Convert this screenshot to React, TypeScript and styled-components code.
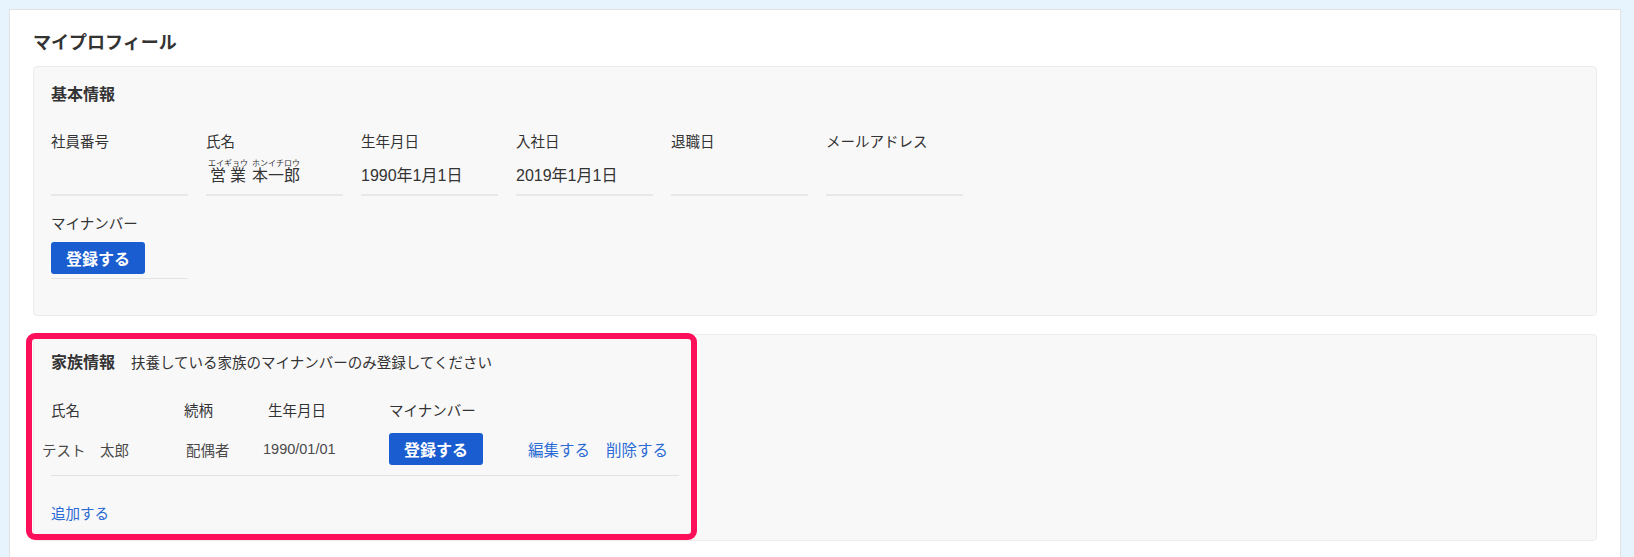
import styled, { createGlobalStyle } from "styled-components";

const GlobalStyle = createGlobalStyle`
    body {
        margin: 0;
        background: #e8f4fd;
        font-family: "Liberation Sans", "Noto Sans CJK JP", sans-serif;
        color: #333;
    }
`

const basicFields = [
    { label: '社員番号', value: '' },
    { label: '氏名', value: 'ruby' },
    { label: '生年月日', value: '1990年1月1日' },
    { label: '入社日', value: '2019年1月1日' },
    { label: '退職日', value: '' },
    { label: 'メールアドレス', value: '' },
];

const family = [
    { name: 'テスト　太郎', relation: '配偶者', birthday: '1990/01/01' },
];

export default function App() {
    return (
        <>
            <GlobalStyle />
            <Page>
                <Card>
                    <PageTitle>マイプロフィール</PageTitle>

                    <Panel>
                        <PanelHeading>
                            <PanelTitle>基本情報</PanelTitle>
                        </PanelHeading>
                        <FieldRow>
                            {basicFields.map((f) => (
                                <Field key={f.label}>
                                    <FieldLabel>{f.label}</FieldLabel>
                                    <FieldValue>
                                        {f.value === 'ruby' ? (
                                            <NameText>
                                                <ruby>営業<rt>エイギョウ</rt></ruby>
                                                <ruby>本一郎<rt>ホンイチロウ</rt></ruby>
                                            </NameText>
                                        ) : f.value}
                                    </FieldValue>
                                </Field>
                            ))}
                        </FieldRow>
                        <FieldRow>
                            <Field>
                                <FieldLabel>マイナンバー</FieldLabel>
                                <FieldAction>
                                    <PrimaryButton>登録する</PrimaryButton>
                                </FieldAction>
                            </Field>
                        </FieldRow>
                    </Panel>

                    <Panel $spaced>
                        <Highlight />
                        <PanelHeading>
                            <PanelTitle>家族情報</PanelTitle>
                            <PanelNote>扶養している家族のマイナンバーのみ登録してください</PanelNote>
                        </PanelHeading>
                        <FamilyTable>
                            <TableHead>
                                <HeadCell>氏名</HeadCell>
                                <HeadCell>続柄</HeadCell>
                                <HeadCell $indent={5}>生年月日</HeadCell>
                                <HeadCell>マイナンバー</HeadCell>
                                <HeadCell />
                            </TableHead>
                            {family.map((m) => (
                                <TableRow key={m.name}>
                                    <NameCell>{m.name}</NameCell>
                                    <RowCell $indent={2}>{m.relation}</RowCell>
                                    <RowCell>{m.birthday}</RowCell>
                                    <RowCell>
                                        <PrimaryButton>登録する</PrimaryButton>
                                    </RowCell>
                                    <Actions>
                                        <RowLink>編集する</RowLink>
                                        <RowLink>削除する</RowLink>
                                    </Actions>
                                </TableRow>
                            ))}
                        </FamilyTable>
                        <AddLink>追加する</AddLink>
                    </Panel>
                </Card>
            </Page>
        </>
    )
}

const Page = styled.div`
    padding: 9px 13px 0 9px;
    height: 557px;
    box-sizing: border-box;
    overflow: hidden;
`

const Card = styled.div`
    background: #fff;
    border: 1px solid #e2e2e2;
    padding: 20px 23px 40px;
    min-height: 620px;
`

const PageTitle = styled.h2`
    margin: 0 0 10px;
    font-size: 18px;
    line-height: 26px;
    font-weight: 700;
    color: #333;
`

const Panel = styled.section<{ $spaced?: boolean }>`
    position: relative;
    background: #f9f8f9;
    border: 1px solid #ececec;
    border-radius: 4px;
    padding: 16px 17px ${({ $spaced }) => ($spaced ? '16px' : '36px')};
    margin-top: ${({ $spaced }) => ($spaced ? '18px' : '0')};
`

const Highlight = styled.div`
    position: absolute;
    top: -2px;
    left: -8px;
    bottom: 0;
    width: 671px;
    box-sizing: border-box;
    border: 6px solid #fe0f59;
    border-radius: 9px;
    pointer-events: none;
`

const PanelHeading = styled.div`
    display: flex;
    align-items: center;
    gap: 16px;
    margin-bottom: 25px;
`

const PanelTitle = styled.h3`
    margin: 0;
    font-size: 16px;
    line-height: 24px;
    font-weight: 700;
    color: #333;
`

const PanelNote = styled.span`
    font-size: 14.5px;
    line-height: 24px;
    color: #333;
`

const FieldRow = styled.div`
    display: flex;
    gap: 18px;
    & + & {
        margin-top: 18px;
    }
`

const Field = styled.div`
    width: 137px;
    display: flex;
    flex-direction: column;
`

const FieldLabel = styled.div`
    font-size: 14.5px;
    line-height: 20px;
    color: #333;
`

const FieldValue = styled.div`
    height: 44px;
    box-sizing: border-box;
    display: flex;
    align-items: flex-end;
    padding-bottom: 7px;
    border-bottom: 2px solid #e8e8e8;
    font-size: 16px;
    line-height: 22px;
    color: #333;
    white-space: nowrap;
`

const NameText = styled.span`
    display: inline-flex;
    gap: 4px;
    margin-left: 2px;
    rt {
        font-size: 8px;
        line-height: 10px;
    }
`

const FieldAction = styled.div`
    padding: 8px 0 4px;
    border-bottom: 1px solid #e4e4e4;
    display: flex;
`

const PrimaryButton = styled.button`
    width: 94px;
    height: 32px;
    border: none;
    border-radius: 3px;
    background: #1a5dd0;
    color: #fff;
    font-family: inherit;
    font-size: 16px;
    font-weight: 700;
    cursor: pointer;
    padding: 0;
`

const FamilyTable = styled.div`
    width: 628px;
    margin-top: 26px;
`

const gridCols = `133px 79px 126px 139px 1fr`;

const TableHead = styled.div`
    display: grid;
    grid-template-columns: ${gridCols};
    font-size: 14.5px;
    line-height: 20px;
    color: #333;
`

const HeadCell = styled.div<{ $indent?: number }>`
    padding-left: ${({ $indent }) => $indent ?? 0}px;
`

const TableRow = styled.div`
    display: grid;
    grid-template-columns: ${gridCols};
    align-items: center;
    margin-top: 12px;
    padding-bottom: 10px;
    border-bottom: 1px solid #e2e2e2;
    font-size: 14.5px;
    color: #4a4a4a;
`

const RowCell = styled.div<{ $indent?: number }>`
    padding-left: ${({ $indent }) => $indent ?? 0}px;
    white-space: nowrap;
`

const NameCell = styled.div`
    margin-left: -9px;
    white-space: nowrap;
`

const Actions = styled.div`
    display: flex;
    gap: 16px;
    white-space: nowrap;
`

const RowLink = styled.a`
    font-size: 15.5px;
    color: #2a6bd3;
    cursor: pointer;
`

const AddLink = styled.a`
    display: block;
    margin-top: 28px;
    font-size: 14.5px;
    line-height: 20px;
    color: #2a6bd3;
    cursor: pointer;
`
